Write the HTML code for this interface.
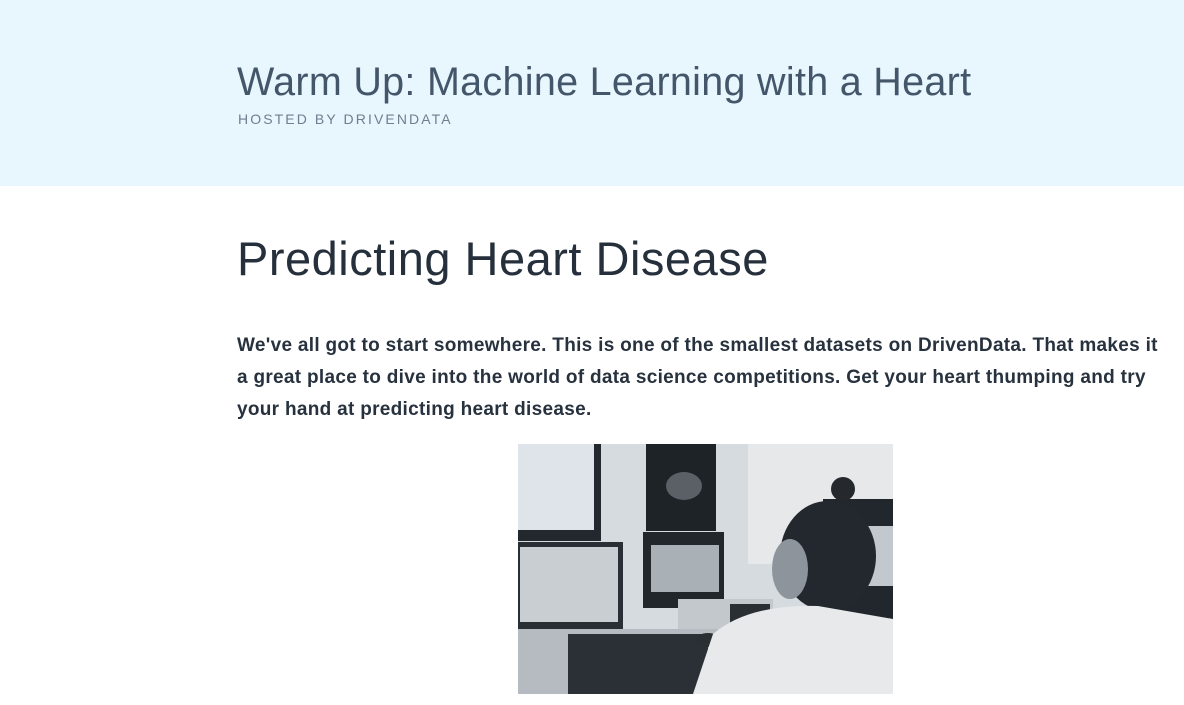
<!DOCTYPE html>
<html><head><meta charset="utf-8"><style>
*{margin:0;padding:0;box-sizing:border-box}
body{width:1184px;height:705px;background:#fff;font-family:"Liberation Sans","DejaVu Sans",sans-serif;overflow:hidden;position:relative}
.hdr{position:absolute;left:0;top:0;width:1184px;height:186px;background:#e8f6fe}
.t1{position:absolute;left:237px;top:60px;font-size:39.5px;font-weight:300;color:#44566a;letter-spacing:0.3px;white-space:nowrap}
.t2{position:absolute;left:238px;top:111px;font-size:14px;color:#6e7f8f;letter-spacing:2.1px;white-space:nowrap}
.h1{position:absolute;left:237px;top:231px;font-size:47px;font-weight:300;color:#25303c;white-space:nowrap;letter-spacing:0.5px}
.p{position:absolute;left:237px;top:330px;width:935px;font-size:19px;font-weight:bold;line-height:32px;color:#27323e;letter-spacing:0.3px}
svg{position:absolute;left:518px;top:444px}
</style></head><body>
<div class="hdr"></div>
<div class="t1">Warm Up: Machine Learning with a Heart</div>
<div class="t2">HOSTED BY DRIVENDATA</div>
<div class="h1">Predicting Heart Disease</div>
<div class="p">We've all got to start somewhere. This is one of the smallest datasets on DrivenData. That makes it a great place to dive into the world of data science competitions. Get your heart thumping and try your hand at predicting heart disease.</div>
<svg width="375" height="250" viewBox="0 0 375 250">
<rect width="375" height="250" fill="#d6dbe0"/>
<rect x="230" y="0" width="145" height="120" fill="#e6e8ea"/>
<rect x="0" y="0" width="83" height="97" fill="#22282e"/>
<rect x="0" y="0" width="76" height="86" fill="#dfe4ea"/>
<rect x="128" y="0" width="70" height="87" fill="#1e2328"/>
<ellipse cx="166" cy="42" rx="18" ry="14" fill="#5a6066"/>
<rect x="125" y="88" width="81" height="76" fill="#22272c"/>
<rect x="133" y="101" width="68" height="47" fill="#a9b0b6"/>
<rect x="0" y="98" width="105" height="88" fill="#2a2f35"/>
<rect x="2" y="103" width="98" height="75" fill="#c9ced3"/>
<rect x="0" y="185" width="200" height="65" fill="#b5bbc1"/>
<rect x="50" y="190" width="140" height="60" fill="#2b3036"/>
<rect x="160" y="155" width="95" height="30" fill="#c3c8cd"/>
<rect x="212" y="160" width="40" height="35" fill="#2a2f34"/>
<ellipse cx="190" cy="196" rx="12" ry="7" fill="#2a2f34"/>
<rect x="305" y="55" width="70" height="125" fill="#22272d"/>
<rect x="350" y="82" width="25" height="60" fill="#c2c8ce"/>
<circle cx="325" cy="45" r="12" fill="#25292e"/>
<ellipse cx="310" cy="112" rx="48" ry="55" fill="#23282e"/>
<ellipse cx="272" cy="125" rx="18" ry="30" fill="#8d949b"/>
<path d="M175 250 L195 190 Q230 160 300 162 L375 175 L375 250 Z" fill="#e7e9eb"/>
</svg>
</body></html>
